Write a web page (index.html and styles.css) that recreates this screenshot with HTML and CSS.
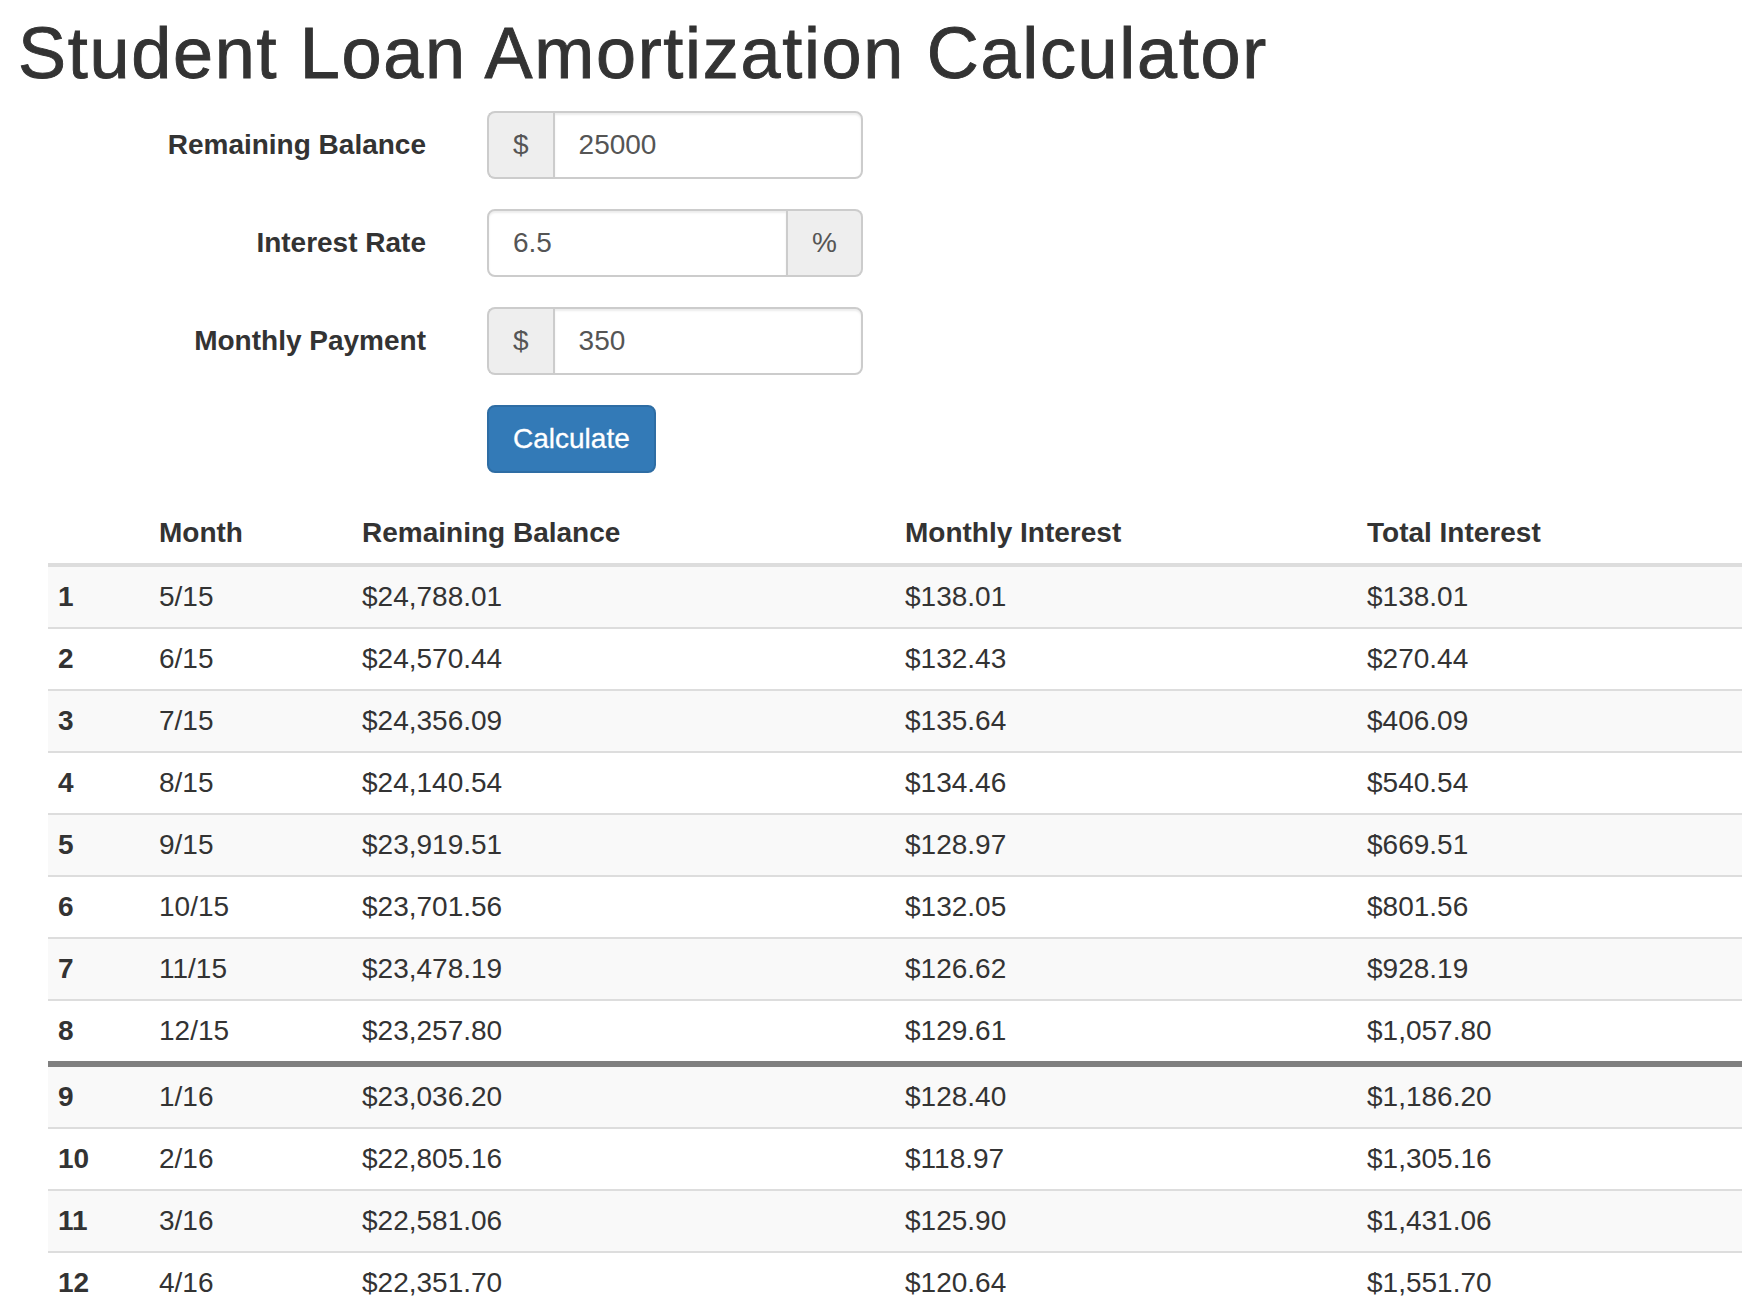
FILE: index.html
```html
<!DOCTYPE html>
<html lang="en">
<head>
<meta charset="utf-8">
<title>Student Loan Amortization Calculator</title>
<link rel="stylesheet" href="styles.css">
</head>
<body>
<div class="page">
  <h1 class="title">Student Loan Amortization Calculator</h1>
  <form class="calc-form">
    <div class="form-group">
      <label class="form-label" for="balance">Remaining Balance</label>
      <div class="input-group">
        <span class="addon addon-left">$</span>
        <input class="form-input" id="balance" type="text" value="25000">
      </div>
    </div>
    <div class="form-group">
      <label class="form-label" for="rate">Interest Rate</label>
      <div class="input-group">
        <input class="form-input input-left" id="rate" type="text" value="6.5">
        <span class="addon addon-right">%</span>
      </div>
    </div>
    <div class="form-group">
      <label class="form-label" for="payment">Monthly Payment</label>
      <div class="input-group">
        <span class="addon addon-left">$</span>
        <input class="form-input" id="payment" type="text" value="350">
      </div>
    </div>
    <div class="form-group">
      <span class="form-label"></span>
      <div class="btn-cell"><button class="btn-primary" type="button">Calculate</button></div>
    </div>
  </form>
  <table class="schedule">
    <colgroup>
      <col class="c1"><col class="c2"><col class="c3"><col class="c4"><col class="c5">
    </colgroup>
    <thead>
      <tr><th></th><th>Month</th><th>Remaining Balance</th><th>Monthly Interest</th><th>Total Interest</th></tr>
    </thead>
    <tbody>
      <tr><th>1</th><td>5/15</td><td>$24,788.01</td><td>$138.01</td><td>$138.01</td></tr>
      <tr><th>2</th><td>6/15</td><td>$24,570.44</td><td>$132.43</td><td>$270.44</td></tr>
      <tr><th>3</th><td>7/15</td><td>$24,356.09</td><td>$135.64</td><td>$406.09</td></tr>
      <tr><th>4</th><td>8/15</td><td>$24,140.54</td><td>$134.46</td><td>$540.54</td></tr>
      <tr><th>5</th><td>9/15</td><td>$23,919.51</td><td>$128.97</td><td>$669.51</td></tr>
      <tr><th>6</th><td>10/15</td><td>$23,701.56</td><td>$132.05</td><td>$801.56</td></tr>
      <tr><th>7</th><td>11/15</td><td>$23,478.19</td><td>$126.62</td><td>$928.19</td></tr>
      <tr><th>8</th><td>12/15</td><td>$23,257.80</td><td>$129.61</td><td>$1,057.80</td></tr>
      <tr class="year-start"><th>9</th><td>1/16</td><td>$23,036.20</td><td>$128.40</td><td>$1,186.20</td></tr>
      <tr><th>10</th><td>2/16</td><td>$22,805.16</td><td>$118.97</td><td>$1,305.16</td></tr>
      <tr><th>11</th><td>3/16</td><td>$22,581.06</td><td>$125.90</td><td>$1,431.06</td></tr>
      <tr><th>12</th><td>4/16</td><td>$22,351.70</td><td>$120.64</td><td>$1,551.70</td></tr>
    </tbody>
  </table>
</div>
</body>
</html>
```
FILE: styles.css
```css
* { box-sizing: border-box; }

html, body {
  margin: 0;
  background: #fff;
}

body {
  font-family: "Liberation Sans", Arial, Helvetica, sans-serif;
  font-size: 28px;
  line-height: 40px;
  color: #333;
}

.page {
  padding: 14px 12px 0 18px;
}

.title {
  margin: 0 0 18px 0;
  font-size: 72px;
  line-height: 79px;
  font-weight: normal;
  letter-spacing: 1.7px;
  -webkit-text-stroke: 0.9px #333;
  color: #333;
}

.calc-form {
  margin: 0 0 30px 0;
}

.form-group {
  display: grid;
  grid-template-columns: 408px 376px;
  column-gap: 61px;
  align-items: center;
  margin-bottom: 30px;
}

.form-label {
  text-align: right;
  font-weight: bold;
  font-size: 28px;
  line-height: 40px;
}

.input-group {
  display: flex;
  height: 68px;
  width: 376px;
}

.addon {
  display: flex;
  align-items: center;
  justify-content: center;
  padding: 0 24px;
  background: #eee;
  border: 2px solid #ccc;
  color: #555;
  font-size: 28px;
  line-height: 40px;
}

.addon-left {
  border-right: 0;
  border-radius: 8px 0 0 8px;
}

.addon-right {
  border-left: 0;
  border-radius: 0 8px 8px 0;
}

.form-input {
  flex: 1;
  min-width: 0;
  height: 68px;
  margin: 0;
  padding: 0 24px;
  font-family: "Liberation Sans", Arial, Helvetica, sans-serif;
  font-size: 28px;
  color: #555;
  background: #fff;
  border: 2px solid #ccc;
  border-radius: 0 8px 8px 0;
  box-shadow: inset 0 2px 2px rgba(0, 0, 0, 0.075);
  outline: none;
}

.input-left {
  border-radius: 8px 0 0 8px;
}

.btn-cell {
  display: flex;
}

.btn-primary {
  height: 68px;
  padding: 0 24px;
  font-family: "Liberation Sans", Arial, Helvetica, sans-serif;
  font-size: 28px;
  line-height: 40px;
  color: #fff;
  -webkit-text-stroke: 0.3px #fff;
  background: #337ab7;
  border: 2px solid #2e6da4;
  border-radius: 8px;
}

.form-group:last-child {
  margin-bottom: 0;
}

.schedule {
  margin-left: 30px;
  width: 1694px;
  table-layout: fixed;
  border-collapse: separate;
  border-spacing: 0;
}

.c1 { width: 101px; }
.c2 { width: 203px; }
.c3 { width: 543px; }
.c4 { width: 462px; }
.c5 { width: 385px; }

.schedule th,
.schedule td {
  padding: 10px;
  line-height: 40px;
  font-size: 28px;
  text-align: left;
  vertical-align: top;
  white-space: nowrap;
}

.schedule thead th {
  font-weight: bold;
  border-bottom: 4px solid #ddd;
}

.schedule tbody th,
.schedule tbody td {
  border-top: 2px solid #ddd;
  font-weight: normal;
}

.schedule tbody th {
  font-weight: bold;
}

.schedule tbody tr:first-child th,
.schedule tbody tr:first-child td {
  border-top: 0;
}

.schedule tbody tr:nth-child(odd) th,
.schedule tbody tr:nth-child(odd) td {
  background: #f9f9f9;
}

.schedule tbody tr.year-start th,
.schedule tbody tr.year-start td {
  border-top: 6px solid #808080;
}
```
